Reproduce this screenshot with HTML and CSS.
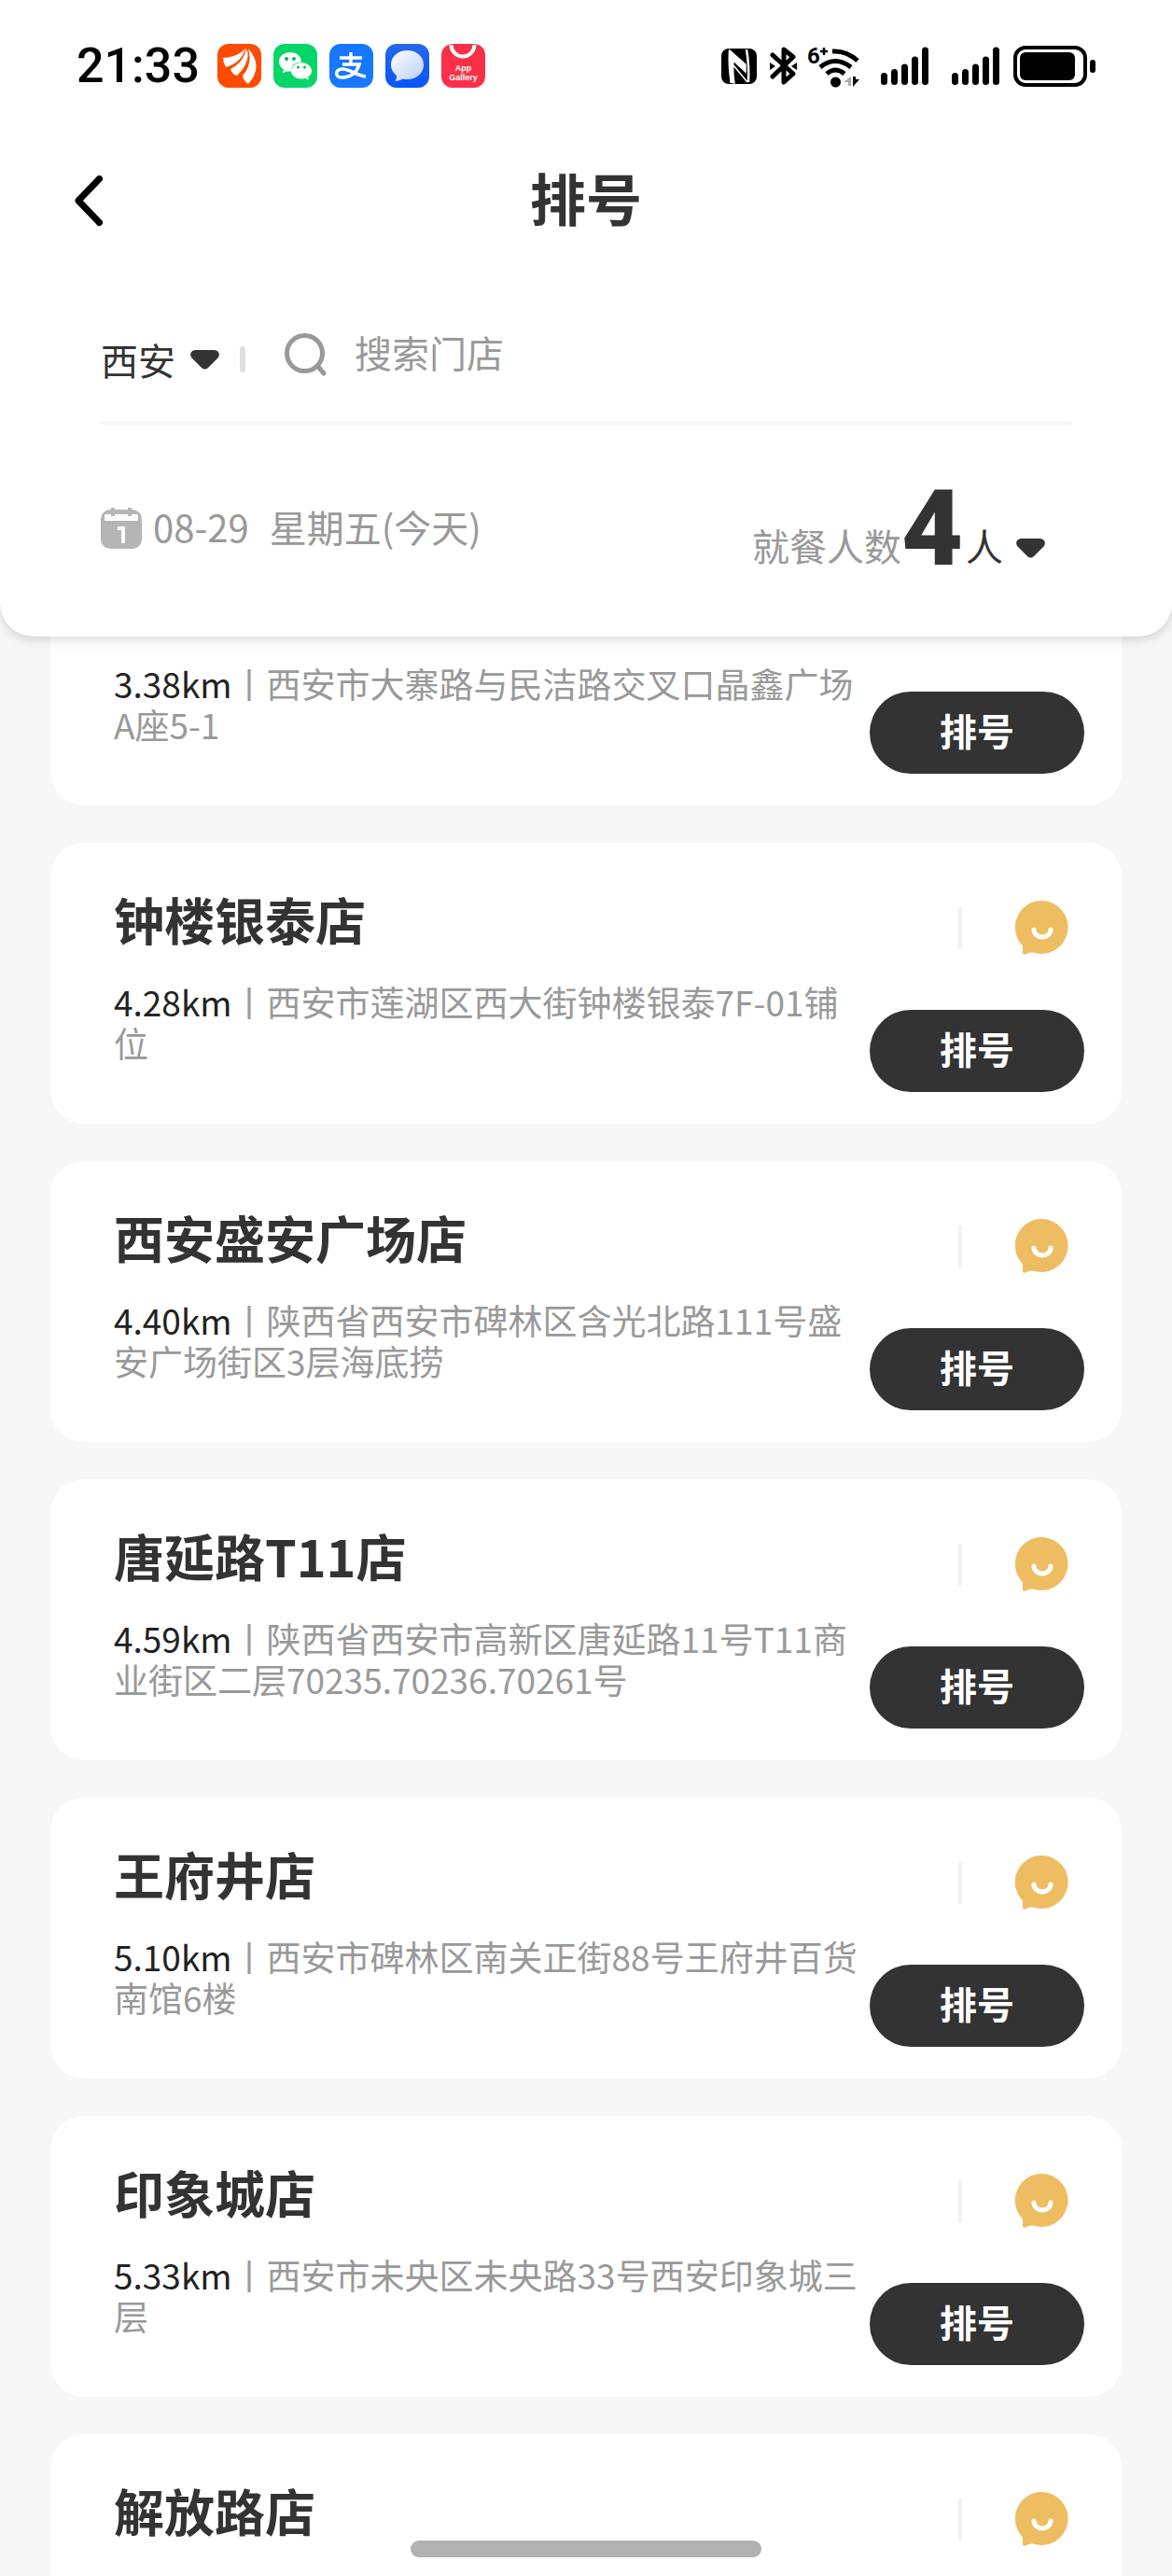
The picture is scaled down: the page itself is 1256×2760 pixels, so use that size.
FILE: index.html
```html
<!DOCTYPE html>
<html lang="zh-CN">
<head>
  <meta charset="UTF-8">
  <meta name="viewport" content="width=device-width, initial-scale=1.0">
  <title>排号</title>
  <link rel="stylesheet" href="styles.css">
</head>
<body>
  <svg width="0" height="0" class="sprite" aria-hidden="true">
    <symbol id="icon-caret" viewBox="0 0 31 21">
      <path d="M6 0h19q4 0 5.500 3q1 3-1 5.500L19 19q-3.500 3-7 0L1.500 8.500Q-.5 6 .5 3Q2 0 6 0z" fill="#333"/>
    </symbol>
    <symbol id="icon-smile" viewBox="0 0 58 58">
      <path d="M29 0a28.500 28.500 0 1 1-10 55.500q-4-.5-8 2q-3 1-3-2v-7A28.500 28.500 0 0 1 29 0z" fill="#eebd62"/>
      <path d="M20 31a9 8 0 0 0 18 0" fill="none" stroke="#fff" stroke-width="5" stroke-linecap="round"/>
    </symbol>
    <symbol id="icon-signal" viewBox="0 0 51 41">
      <path d="M3.500 31.500v6M14.500 27.500v10M25.500 22v15.500M36.500 14v23.500M47.500 4v33.500" stroke="#000" stroke-width="7" stroke-linecap="round"/>
    </symbol>
  </svg>

  <header class="top-panel">
    <div class="status-bar">
      <time class="clock">21:33</time>
      <div class="app-icons">
        <svg width="47" height="47" viewBox="0 0 47 47">
          <rect width="47" height="47" rx="12" fill="#ff4b00"/>
          <path d="M6 15Q22 14 30 5Q26 20 9 25Q6 20 6 15zM14 27Q28 20 31 5Q37 18 21 34Q16 33 14 27zM33 5Q50 24 33 43Q28 40 27 34Q38 22 33 5z" fill="#fff"/>
        </svg>
        <svg width="47" height="47" viewBox="0 0 47 47">
          <rect width="47" height="47" rx="12" fill="#07d568"/>
          <path d="M18 9c7 0 12 4.500 12 10.500q-11 0-11 10h-5l-4 2 1-4c-3-2-5-5-5-8C6 13.500 11 9 18 9z" fill="#fff"/>
          <path d="M30 20c6 0 11 4 11 9 0 3-1.500 5-4 6.500l1 3-4-1.500c-8 2-15-2-15-8 0-5 5-9 11-9z" fill="#fff"/>
          <g fill="#07b45a"><circle cx="14" cy="16" r="2"/><circle cx="22" cy="16" r="2"/><circle cx="26.500" cy="25" r="1.500"/><circle cx="33.500" cy="25" r="1.500"/></g>
        </svg>
        <svg width="47" height="47" viewBox="0 0 47 47">
          <rect width="47" height="47" rx="12" fill="#1678ff"/>
          <path d="M11 15h24M23 9v13M14 22h18Q28 35 15 36C6 37 5 28 13 27C21 26 28 34 39 35" fill="none" stroke="#fff" stroke-width="3.500"/>
        </svg>
        <svg width="47" height="47" viewBox="0 0 47 47">
          <defs>
            <linearGradient id="bubble" x1="0" y1="0" x2="1" y2="1"><stop stop-color="#fff"/><stop offset="1" stop-color="#b9cdff"/></linearGradient>
            <linearGradient id="blue" x1="0" y1="0" x2="0" y2="1"><stop stop-color="#2468ea"/><stop offset="1" stop-color="#0a55fa"/></linearGradient>
          </defs>
          <rect width="47" height="47" rx="12" fill="url(#blue)"/>
          <path d="M23.500 7C33 7 41 13 41 22.500S33 38 23.500 38q-3 0-5-.5q-3 2-8 2.500q2-3 1.500-6Q6 29 6 22.500C6 13 14 7 23.500 7z" fill="url(#bubble)"/>
        </svg>
        <svg width="47" height="47" viewBox="0 0 47 47">
          <rect width="47" height="47" rx="12" fill="#fb3048"/>
          <path d="M10.500 1a12.500 12.500 0 0 0 25 0" fill="none" stroke="#fff" stroke-width="4"/>
          <text x="23.500" y="29" class="gallery-text">App</text>
          <text x="23.500" y="39" class="gallery-text">Gallery</text>
        </svg>
      </div>
      <div class="system-icons">
        <svg width="38" height="38" viewBox="0 0 38 38">
          <rect width="38" height="38" rx="8" fill="#000"/>
          <path d="M9 2Q8 20 11 37M27 1Q30 18 29 36" fill="none" stroke="#fff" stroke-width="2.500"/>
          <path d="M9 2L26 17V25L13 13Q12 25 14 37L10 36zM13 18L28 36" fill="#fff" stroke="#fff" stroke-width="1.500"/>
        </svg>
        <svg class="bluetooth" width="29" height="41" viewBox="0 0 29 41">
          <path d="M3 9l22 20-10 9V3l10 8L3 32" fill="none" stroke="#000" stroke-width="5" stroke-linejoin="round" stroke-linecap="round"/>
          <path d="M0 17l6 4-6 4zM29 17l-6 4 6 4z" fill="#000"/>
        </svg>
        <svg class="wifi" width="57" height="44" viewBox="0 0 57 44">
          <text x="0" y="19" class="wifi-text">6</text>
          <path d="M14 6h8M18 2v8" stroke="#000" stroke-width="2.500"/>
          <path d="M27 6Q42 5 54 16M14 23Q30 10 47 23M21 30Q30 22 40 30" fill="none" stroke="#000" stroke-width="5"/>
          <circle cx="30.500" cy="39" r="5.500" fill="#000"/>
          <path d="M47 33v10h-3v-4h-5z" fill="#aaa"/>
          <path d="M49 33v11l7-8h-4v-3z" fill="#000"/>
        </svg>
        <svg class="signal" width="51" height="41"><use href="#icon-signal"/></svg>
        <svg class="signal" width="51" height="41"><use href="#icon-signal"/></svg>
        <svg width="88" height="44" viewBox="0 0 88 44">
          <rect x="2" y="2" width="75" height="40" rx="11" fill="none" stroke="#000" stroke-width="4"/>
          <rect x="7" y="7" width="59" height="30" rx="6" fill="#000"/>
          <rect x="82" y="15" width="6" height="14" rx="3" fill="#000"/>
        </svg>
      </div>
    </div>

    <div class="nav-bar">
      <button class="back-button" type="button" aria-label="返回">
        <svg width="30" height="54" viewBox="0 0 30 54">
          <path d="M26.500 3.500L4 27l22.500 23.500" fill="none" stroke="#000" stroke-width="7" stroke-linecap="round" stroke-linejoin="round"/>
        </svg>
      </button>
      <h1 class="page-title">排号</h1>
    </div>

    <div class="search-row">
      <div class="city">
        <select class="city-select" aria-label="城市">
          <option>西安</option>
        </select>
        <svg width="31" height="21"><use href="#icon-caret"/></svg>
        <span class="city-divider"></span>
      </div>
      <label for="search" class="search-icon" aria-label="搜索门店">
        <svg width="45" height="46" viewBox="0 0 45 46">
          <circle cx="21.500" cy="21.500" r="19" fill="none" stroke="#999" stroke-width="5"/>
          <path d="M36 36l6 7" stroke="#999" stroke-width="5" stroke-linecap="round"/>
        </svg>
      </label>
      <input type="text" id="search" class="search-input" placeholder="搜索门店">
    </div>

    <div class="booking-row">
      <div class="date">
        <svg width="44" height="44" viewBox="0 0 44 44">
          <rect y="2" width="44" height="42" rx="10" fill="#b5b5b5"/>
          <path d="M5 7h34q1 0 1 2v5H4V9q0-2 1-2z" fill="#fff"/>
          <path d="M13 0v9M31 0v9" stroke="#b5b5b5" stroke-width="4"/>
          <path d="M18 22h6v16" fill="none" stroke="#fff" stroke-width="4"/>
        </svg>
        <div class="date-text">
          <span>08-29</span>
          <span>星期五(今天)</span>
        </div>
      </div>
      <div class="party">
        <label for="party-size" class="party-label">就餐人数</label>
        <select id="party-size" class="party-size">
          <option>4</option>
        </select>
        <span class="party-unit">人</span>
        <svg class="party-caret" width="31" height="21"><use href="#icon-caret"/></svg>
      </div>
    </div>
  </header>

  <main class="store-list">
    <!-- scrolled under the top panel -->
    <article class="store-card scrolled">
      <div class="store-body">
        <p class="address"><span class="distance">3.38km</span>丨西安市大寨路与民洁路交叉口晶鑫广场A座5-1</p>
        <button class="queue-button" type="button">排号</button>
      </div>
    </article>

    <article class="store-card">
      <div class="store-head">
        <h2 class="store-name">钟楼银泰店</h2>
        <div class="contact">
          <span class="contact-divider"></span>
          <button class="contact-button" type="button" aria-label="联系门店"><svg width="58" height="58"><use href="#icon-smile"/></svg></button>
        </div>
      </div>
      <div class="store-body">
        <p class="address"><span class="distance">4.28km</span>丨西安市莲湖区西大街钟楼银泰7F-01铺位</p>
        <button class="queue-button" type="button">排号</button>
      </div>
    </article>

    <article class="store-card">
      <div class="store-head">
        <h2 class="store-name">西安盛安广场店</h2>
        <div class="contact">
          <span class="contact-divider"></span>
          <button class="contact-button" type="button" aria-label="联系门店"><svg width="58" height="58"><use href="#icon-smile"/></svg></button>
        </div>
      </div>
      <div class="store-body">
        <p class="address"><span class="distance">4.40km</span>丨陕西省西安市碑林区含光北路111号盛安广场街区3层海底捞</p>
        <button class="queue-button" type="button">排号</button>
      </div>
    </article>

    <article class="store-card">
      <div class="store-head">
        <h2 class="store-name">唐延路T11店</h2>
        <div class="contact">
          <span class="contact-divider"></span>
          <button class="contact-button" type="button" aria-label="联系门店"><svg width="58" height="58"><use href="#icon-smile"/></svg></button>
        </div>
      </div>
      <div class="store-body">
        <p class="address"><span class="distance">4.59km</span>丨陕西省西安市高新区唐延路11号T11商业街区二层70235.70236.70261号</p>
        <button class="queue-button" type="button">排号</button>
      </div>
    </article>

    <article class="store-card">
      <div class="store-head">
        <h2 class="store-name">王府井店</h2>
        <div class="contact">
          <span class="contact-divider"></span>
          <button class="contact-button" type="button" aria-label="联系门店"><svg width="58" height="58"><use href="#icon-smile"/></svg></button>
        </div>
      </div>
      <div class="store-body">
        <p class="address"><span class="distance">5.10km</span>丨西安市碑林区南关正街88号王府井百货南馆6楼</p>
        <button class="queue-button" type="button">排号</button>
      </div>
    </article>

    <article class="store-card">
      <div class="store-head">
        <h2 class="store-name">印象城店</h2>
        <div class="contact">
          <span class="contact-divider"></span>
          <button class="contact-button" type="button" aria-label="联系门店"><svg width="58" height="58"><use href="#icon-smile"/></svg></button>
        </div>
      </div>
      <div class="store-body">
        <p class="address"><span class="distance">5.33km</span>丨西安市未央区未央路33号西安印象城三层</p>
        <button class="queue-button" type="button">排号</button>
      </div>
    </article>

    <article class="store-card last">
      <div class="store-head">
        <h2 class="store-name">解放路店</h2>
        <div class="contact">
          <span class="contact-divider"></span>
          <button class="contact-button" type="button" aria-label="联系门店"><svg width="58" height="58"><use href="#icon-smile"/></svg></button>
        </div>
      </div>
    </article>
  </main>

  <div class="home-indicator"></div>
</body>
</html>
```
FILE: styles.css
```css
* {
  box-sizing: border-box;
}
body {
  display: flex;
  flex-direction: column;
  height: 100vh;
  margin: 0;
  overflow: hidden;
  background: #f7f7f7;
  color: #333;
  font-family: "Noto Sans CJK SC", sans-serif;
  font-size: 40px;
}
h1, h2, p {
  margin: 0;
}
svg {
  display: block;
  flex-shrink: 0;
}
button, select, input {
  padding: 0;
  border: none;
  background: none;
  color: inherit;
  font: inherit;
}
select {
  appearance: none;
}
.sprite {
  position: absolute;
}

/* top panel */
.top-panel {
  position: relative;
  z-index: 1;
  flex-shrink: 0;
  background: #fff;
  border-radius: 0 0 36px 36px;
  box-shadow: 0 4px 12px rgba(0, 0, 0, 0.14);
}
.status-bar {
  display: flex;
  align-items: center;
  height: 141px;
  padding: 0 82px;
  color: #000;
}
.clock {
  width: 151px;
  font-family: Roboto, sans-serif;
  font-size: 52px;
  font-weight: 500;
  line-height: 60px;
}
.app-icons {
  display: flex;
  gap: 13px;
}
.gallery-text {
  fill: #fff;
  font: bold 9px "Liberation Sans", sans-serif;
  text-anchor: middle;
}
.system-icons {
  display: flex;
  align-items: center;
  margin-left: auto;
}
.wifi {
  margin: 0 -3px 0 11px;
  overflow: visible;
}
.wifi-text {
  font: bold 24px Roboto, sans-serif;
}
.bluetooth {
  margin-left: 14px;
}
.signal {
  margin-left: 25px;
}
.signal + svg:last-child {
  margin-left: 15px;
}
.nav-bar {
  display: flex;
  align-items: center;
  height: 148px;
  padding: 0 80px;
}
.back-button {
  width: 30px;
}
.page-title {
  flex: 1;
  padding: 0 30px 8px 0;
  font-size: 60px;
  font-weight: 700;
  line-height: 68px;
  text-align: center;
}
.search-row {
  display: flex;
  align-items: center;
  height: 166px;
  margin: 0 108px;
  padding-top: 20px;
  border-bottom: 4px solid #f7f7f7;
}
.city {
  display: flex;
  align-items: center;
  margin-top: 10px;
}
.city-select {
  width: 80px;
  margin-right: 16px;
}
.city-divider {
  width: 6px;
  height: 28px;
  margin-left: 22px;
  border-radius: 3px;
  background: #dfdde0;
}
.search-icon {
  margin: 0 30px 0 42px;
}
.search-input {
  flex: 1;
  min-width: 0;
  padding-bottom: 6px;
  outline: none;
}
.search-input::placeholder {
  color: #999;
}
.booking-row {
  display: flex;
  align-items: center;
  justify-content: space-between;
  height: 227px;
  padding: 0 136px 6px 108px;
  color: #999;
}
.date {
  display: flex;
  align-items: center;
  gap: 12px;
}
.date-text {
  display: flex;
  gap: 22px;
  padding-bottom: 4px;
}
.party {
  display: flex;
  align-items: center;
}
.party-label,
.party-unit {
  margin-top: 36px;
}
.party-caret {
  margin-top: 44px;
}
.party-size {
  width: 69px;
  height: 134px;
  color: #333;
  font-family: Roboto, sans-serif;
  font-size: 114px;
  font-weight: 900;
}
.party-unit {
  margin-right: 14px;
  color: #333;
}

/* stores */
.store-list {
  display: flex;
  flex: 1;
  flex-direction: column;
  gap: 40px;
  min-height: 0;
  padding: 0 54px;
  overflow: hidden;
}
.store-card {
  flex-shrink: 0;
  padding: 50px 40px 34px 68px;
  border-radius: 36px;
  background: #fff;
}
.store-card.scrolled {
  padding-top: 0;
  border-radius: 0 0 36px 36px;
}
.store-card.last {
  min-height: 301px;
}
.store-head {
  display: flex;
  align-items: flex-start;
  justify-content: space-between;
  padding-right: 16px;
}
.store-name {
  font-size: 54px;
  font-weight: 700;
  line-height: 64px;
}
.contact {
  display: flex;
  align-items: center;
  gap: 57px;
  margin-top: 12px;
}
.contact-divider {
  width: 4px;
  height: 45px;
  background: #f3f3f3;
}
.store-body {
  display: flex;
  align-items: flex-start;
}
.address {
  flex: 1;
  padding-top: 28px;
  color: #999;
  font-size: 37px;
  line-height: 44px;
}
.distance {
  color: #222;
}
.queue-button {
  width: 230px;
  height: 88px;
  margin-top: 59px;
  padding-bottom: 6px;
  border-radius: 44px;
  background: #333;
  color: #fff;
  font-weight: 700;
}

.home-indicator {
  position: fixed;
  right: 0;
  bottom: 20px;
  left: 0;
  z-index: 2;
  width: 30%;
  height: 18px;
  margin: 0 auto;
  border-radius: 9px;
  background: #b1b1b1;
}
```
